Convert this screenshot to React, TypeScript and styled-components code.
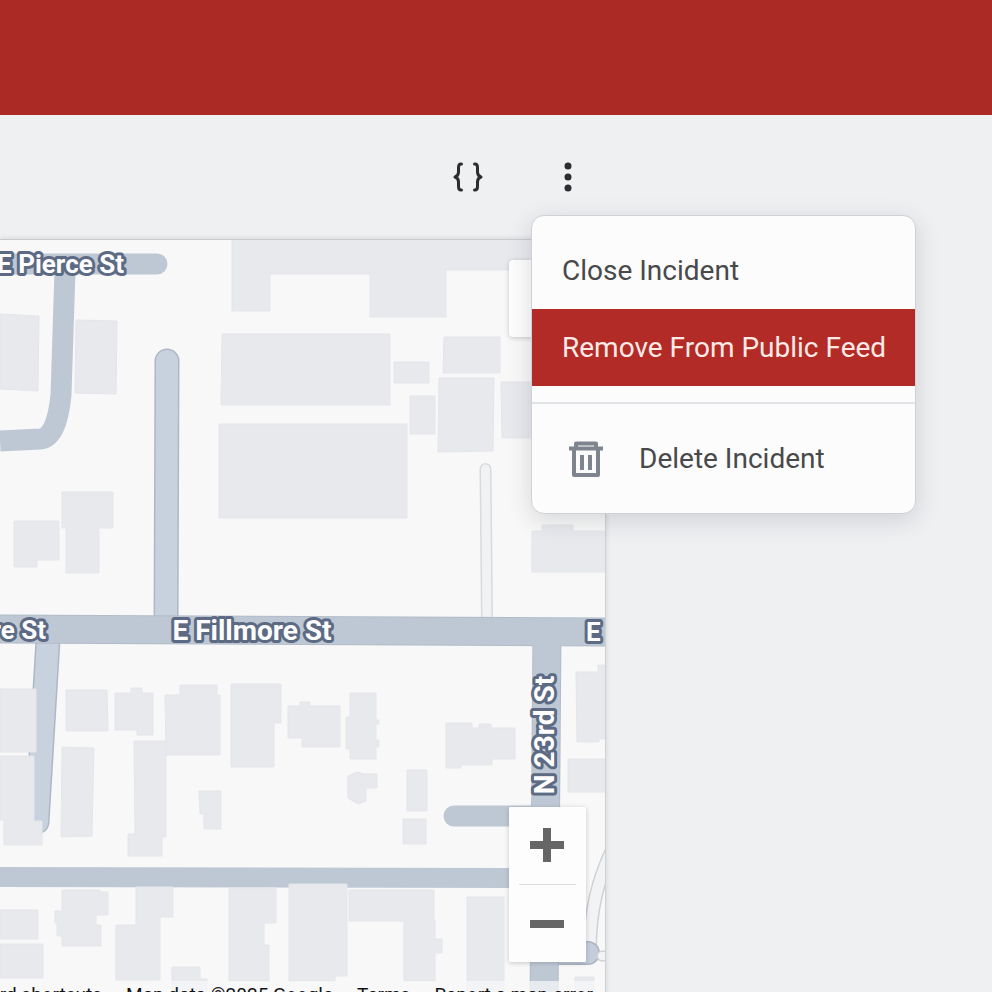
import React from "react";
import styled, { createGlobalStyle } from "styled-components";

const GlobalStyle = createGlobalStyle`
  *, *::before, *::after { box-sizing: border-box; }
  html, body, #root { height: 100%; margin: 0; }
  body { overflow: hidden; background: #eff0f2; font-family: Roboto, sans-serif; }
  button { border: 0; padding: 0; margin: 0; background: none; font: inherit; color: inherit; cursor: pointer; }
`;

const Page = styled.div`
  display: flex;
  flex-direction: column;
  height: 100vh;
`;

const Header = styled.header`
  flex: 0 0 115px;
  background: #ab2a26;
`;

const Main = styled.main`
  flex: 1;
  min-height: 0;
  display: flex;
  flex-direction: column;
  margin-right: 386px;
`;

const Toolbar = styled.div`
  flex: 0 0 124px;
  display: flex;
  align-items: center;
  justify-content: flex-end;
  gap: 24px;
`;

const IconButton = styled.button`
  display: grid;
  place-items: center;
  width: 76px;
  height: 76px;
  color: #2b2d30;
`;

const MenuAnchor = styled.div`
  position: relative;
  z-index: 2;
`;

const Menu = styled.div`
  position: absolute;
  top: 76px;
  left: 1px;
  width: 385px;
  padding: 16px 0;
  border: 1px solid #d0d1d4;
  border-radius: 13px;
  background: #fcfcfc;
  box-shadow: 0 6px 24px rgba(40, 44, 56, 0.16);
`;

const MenuItem = styled.button<{ $active?: boolean }>`
  display: flex;
  align-items: center;
  gap: 31px;
  width: 100%;
  height: 77px;
  padding: 0 30px;
  font-size: 28px;
  line-height: 32px;
  white-space: nowrap;
  color: ${(p) => (p.$active ? "#fdeae6" : "#48494b")};
  background: ${(p) => (p.$active ? "#b32b26" : "transparent")};
`;

const Divider = styled.hr`
  height: 2px;
  margin: 16px 0;
  border: 0;
  background: #e2e3e6;
`;

const MapFrame = styled.section`
  position: relative;
  flex: 0 0 770px;
  border-top: 1px solid #c9cbcf;
  border-right: 1px solid #cfd1d4;
  background: #f8f8f8;
  box-shadow: 0 0 5px rgba(40, 44, 56, 0.16);
  overflow: hidden;
`;

const MapDrawing = styled.svg`
  display: block;
  width: 100%;
  height: 100%;
`;

const MapControl = styled.div<{ $corner: "top" | "bottom" }>`
  position: absolute;
  right: 19px;
  ${(p) => (p.$corner === "top" ? "top: 20px;" : "bottom: 47px;")}
  display: flex;
  flex-direction: column;
  align-items: center;
  width: 77px;
  border-radius: ${(p) => (p.$corner === "top" ? 4 : 1)}px;
  background: #fdfdfd;
  box-shadow: 0 1px 5px rgba(0, 0, 0, 0.2);
`;

const ControlButton = styled.button`
  display: grid;
  place-items: center;
  width: 100%;
  height: 77px;
`;

const ControlRule = styled.span`
  width: 57px;
  height: 1px;
  background: #dcdddf;
`;

const Attribution = styled.footer`
  position: absolute;
  right: 0;
  bottom: 0;
  left: 0;
  display: flex;
  justify-content: flex-end;
  gap: 24px;
  height: 28px;
  padding-right: 12px;
  background: rgba(248, 248, 248, 0.7);
  font-size: 19px;
  line-height: 28px;
  white-space: nowrap;
  color: #111;

  a, button { color: inherit; text-decoration: none; }
`;

const Street = styled.text<{ $wide?: boolean }>`
  font: 700 ${(p) => (p.$wide ? 28 : 26)}px Roboto, sans-serif;
  fill: #fdfdff;
  stroke: #5c6a83;
  stroke-width: 6px;
  stroke-linejoin: round;
  paint-order: stroke;
`;

const BracesIcon = () => (
  <svg width="30" height="30" viewBox="0 0 30 30" fill="none" stroke="currentColor" strokeWidth="3" strokeLinecap="round" strokeLinejoin="round" aria-hidden="true">
    <path d="M8.500 2H8C5.600 2 5.500 4 5.500 5.500V10C5.500 12.500 3.800 14.500 2 15C3.800 15.500 5.500 17.500 5.500 20V24.500C5.500 26 5.600 28 8 28H8.500" />
    <path d="M21.500 2H22C24.400 2 24.500 4 24.500 5.500V10C24.500 12.500 26.200 14.500 28 15C26.200 15.500 24.500 17.500 24.500 20V24.500C24.500 26 24.400 28 22 28H21.500" />
  </svg>
);

const DotsIcon = () => (
  <svg width="8" height="30" viewBox="0 0 8 30" fill="currentColor" aria-hidden="true">
    <circle cx="4" cy="4" r="3.500" />
    <circle cx="4" cy="15" r="3.500" />
    <circle cx="4" cy="26" r="3.500" />
  </svg>
);

const TrashIcon = () => (
  <svg width="46" height="38" viewBox="0 0 46 38" fill="none" stroke="#7f858f" strokeWidth="4" strokeLinejoin="round" aria-hidden="true">
    <path d="M7 8.500H41M14 8V3.500H34V8M12 9V35H36V9M20 15V30M28 15V30" />
  </svg>
);

const buildings = [
  "M232 239H606V270H446V317H370V274H270V311H232Z",
  "M0 314L39 316L38 391L0 389Z",
  "M76 320L117 321L116 394L75 393Z",
  "M222 334H390V405H221Z",
  "M219 424H407V518H219Z",
  "M394 362H429V383H394Z",
  "M444 337H500V373H443Z",
  "M410 396H435V434H410Z",
  "M439 378H494L493 451L438 452Z",
  "M501 382H606V438H502Z",
  "M532 531H542V525H573V531H606V572H532Z",
  "M14 521H59V560H37V567H14Z",
  "M62 492H113V528H99V573H66V528H62Z",
  "M0 689H36V752H0Z",
  "M0 756H34V821H42V845H4V820H0Z",
  "M66 690H107L108 731H66Z",
  "M115 693H131V688H142V693H153V735H137V730H115Z",
  "M165 695H180V685H217V695H220V755H166Z",
  "M231 684H281V723H274V767H231Z",
  "M62 747L94 748L92 836L61 837Z",
  "M134 741H166V837H162V856H128V834H135Z",
  "M199 791H221V829H204V814H200Z",
  "M288 706H300V702H310V706H340V747H302V738H288Z",
  "M350 693H376V720H379V724H376V740H379V747H376V759H350V749H346V717H350Z",
  "M348 776L357 772L364 774H377V788H366V801L358 804L348 798Z",
  "M407 770H427V811H407Z",
  "M403 819H426V844H403Z",
  "M446 723H472V728H479V724H491V728H515V759H492V765H461V768H446Z",
  "M576 672H598V665H606V739H599V742H577Z",
  "M568 759H606V792H568Z",
  "M0 910H38V939H0Z",
  "M0 944H43V978H0Z",
  "M62 890H100V892H108V915H96V925H101V946H62V936H57V923H55V911H62Z",
  "M136 887H173V917H160V980H116V925H136Z",
  "M172 967H200V979H207V992H172Z",
  "M229 888H276V923H264V945H269V981H229Z",
  "M289 884H347V976H335V981H289Z",
  "M349 890H434V920H435V939H442V953H435V981H404V921H349Z",
  "M467 897H504V1009H467Z",
  "M575 977H594V992H575Z",
];

const StreetMap = () => (
  <MapDrawing viewBox="0 240 605 769" preserveAspectRatio="xMaxYMin slice" role="img" aria-label="Street map around E Fillmore St and N 23rd St">
    <rect x="0" y="239" width="606" height="771" fill="#f8f8f8" />

    <g fill="none" strokeLinecap="round">
      <path d="M167 361L166 630" stroke="#aeb8c5" strokeWidth="25" />
      <path d="M167 361L166 630" stroke="#c8d2df" strokeWidth="22" />
      <path d="M48 640L37 822" stroke="#aeb8c5" strokeWidth="25" />
      <path d="M48 640L37 822" stroke="#c7d2de" strokeWidth="22" />
      <path d="M485.500 469L487 620" stroke="#d8dade" strokeWidth="12" />
      <path d="M485.500 469L487 620" stroke="#f1f2f4" strokeWidth="9" />
      <path d="M590 950C590 910 598 880 612 850" stroke="#cfd1d4" strokeWidth="14" />
      <path d="M590 950C590 910 598 880 612 850" stroke="#f2f3f4" strokeWidth="11" />
      <path d="M545 953H588" stroke="#abb4c0" strokeWidth="24" />
      <path d="M545 953H588" stroke="#c3cddb" strokeWidth="21" />
      <path d="M602 956H616" stroke="#cfd1d4" strokeWidth="11" />
      <path d="M602 956H616" stroke="#f2f3f4" strokeWidth="8" />
    </g>
    <g fill="none" stroke="#bec8d5">
      <path d="M0 264H157" strokeWidth="21" strokeLinecap="round" />
      <path d="M65 270L61 395C58 425 51 438 40 439L0 441" strokeWidth="21" />
      <path d="M454 816H545" strokeWidth="21" strokeLinecap="round" />
      <path d="M0 877L545 878" strokeWidth="20" />
      <path d="M0 629L606 632" stroke="#b2bcc8" strokeWidth="29" />
      <path d="M547 632L544 1009" stroke="#b2bcc8" strokeWidth="29" />
      <path d="M0 629L606 632M547 632L544 1009" strokeWidth="27" />
    </g>

    <g fill="#e8e9ed" stroke="#e5e6e9" strokeWidth="1">
      {buildings.map((d) => (
        <path key={d} d={d} />
      ))}
    </g>

    <Street x="124" y="273" textAnchor="end">E Pierce St</Street>
    <Street x="46" y="639" textAnchor="end">E Fillmore St</Street>
    <Street x="252" y="640" textAnchor="middle" $wide>E Fillmore St</Street>
    <Street x="586" y="641">E Fillmore St</Street>
    <Street transform="translate(554 735) rotate(-90)" textAnchor="middle" $wide>N 23rd St</Street>
  </MapDrawing>
);

export default function App() {
  return (
    <>
      <GlobalStyle />
      <Page>
        <Header />
        <Main>
          <Toolbar>
            <IconButton type="button" aria-label="View JSON">
              <BracesIcon />
            </IconButton>
            <MenuAnchor>
              <IconButton type="button" aria-label="More actions" aria-haspopup="menu" aria-expanded="true">
                <DotsIcon />
              </IconButton>
              <Menu role="menu">
                <MenuItem type="button" role="menuitem">Close Incident</MenuItem>
                <MenuItem type="button" role="menuitem" $active>Remove From Public Feed</MenuItem>
                <Divider />
                <MenuItem type="button" role="menuitem">
                  <TrashIcon />
                  Delete Incident
                </MenuItem>
              </Menu>
            </MenuAnchor>
          </Toolbar>
          <MapFrame>
            <StreetMap />
            <MapControl $corner="top">
              <ControlButton type="button" aria-label="Toggle fullscreen view" />
            </MapControl>
            <MapControl $corner="bottom">
              <ControlButton type="button" aria-label="Zoom in">
                <svg width="36" height="36" viewBox="0 0 36 36" stroke="#666" strokeWidth="8" aria-hidden="true">
                  <path d="M0 17H34M17 0V34" />
                </svg>
              </ControlButton>
              <ControlRule />
              <ControlButton type="button" aria-label="Zoom out">
                <svg width="36" height="36" viewBox="0 0 36 36" stroke="#666" strokeWidth="8" aria-hidden="true">
                  <path d="M0 18H34" />
                </svg>
              </ControlButton>
            </MapControl>
            <Attribution>
              <button type="button">Keyboard shortcuts</button>
              <span>Map data ©2025 Google</span>
              <a href="#terms">Terms</a>
              <a href="#report">Report a map error</a>
            </Attribution>
          </MapFrame>
        </Main>
      </Page>
    </>
  );
}
